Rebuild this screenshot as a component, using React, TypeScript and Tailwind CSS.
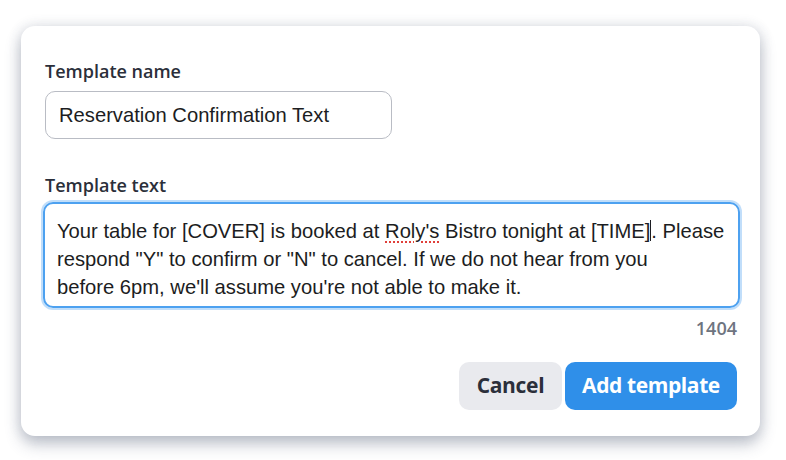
export default function App() {
  return (
    <div className="w-[786px] h-[460px] bg-white overflow-hidden font-['Liberation_Sans',Arial,sans-serif]">
      <div className="ml-[21px] mt-[26px] w-[739px] h-[410px] rounded-[14px] bg-white shadow-[0_8px_16px_rgba(60,70,100,0.32),0_0_14px_rgba(60,70,100,0.14)] pl-[24px] pr-[21px] pt-[34px]">
        <label className="block font-['Open_Sans',sans-serif] text-[18px] leading-[23px] font-semibold text-[#2b2f3a]">
          Template name
        </label>
        <div className="mt-[8px] w-[347px] h-[48px] rounded-[10px] border border-[#b9bcc4] flex items-center px-[13px] text-[20.2px] text-[#1c1d22]">
          Reservation Confirmation Text
        </div>

        <label className="block mt-[35px] font-['Open_Sans',sans-serif] text-[18px] leading-[23px] font-semibold text-[#2b2f3a]">
          Template text
        </label>
        <div className="mt-[5px] -ml-[2px] w-[697px] h-[106px] rounded-[10px] border-2 border-[#4da1f0] shadow-[0_0_0_2px_rgba(77,161,240,0.35)] px-[12px] pt-[13px] text-[20.2px] leading-[28px] text-[#1c1d22]">
          <div className="whitespace-nowrap">
            Your table for [COVER] is booked at{" "}
            <span className="underline decoration-dotted decoration-[#e0403a] decoration-2 underline-offset-[3px]">
              Roly's
            </span>{" "}
            Bistro tonight at [TIME]
            <span className="inline-block w-px h-[21px] bg-[#1c1d22] align-[-3px]" />. Please
          </div>
          <div className="whitespace-nowrap">
            respond "Y" to confirm or "N" to cancel. If we do not hear from you
          </div>
          <div className="whitespace-nowrap">
            before 6pm, we'll assume you're not able to make it.
          </div>
        </div>

        <div className="mt-[9px] pr-[2px] text-right font-['Open_Sans',sans-serif] text-[18px] leading-[22px] font-semibold text-[#6e7480]">
          1404
        </div>

        <div className="mt-[23px] pr-[2px] flex justify-end gap-[3px]">
          <button className="w-[103px] h-[48px] rounded-[10px] bg-[#e9eaee] font-['Open_Sans',sans-serif] text-[21px] font-bold text-[#2b2f3a] tracking-[-0.3px]">
            Cancel
          </button>
          <button className="w-[172px] h-[48px] rounded-[10px] bg-[#2f8fe9] font-['Open_Sans',sans-serif] text-[21px] font-bold text-white tracking-[-0.4px]">
            Add template
          </button>
        </div>
      </div>
    </div>
  );
}
